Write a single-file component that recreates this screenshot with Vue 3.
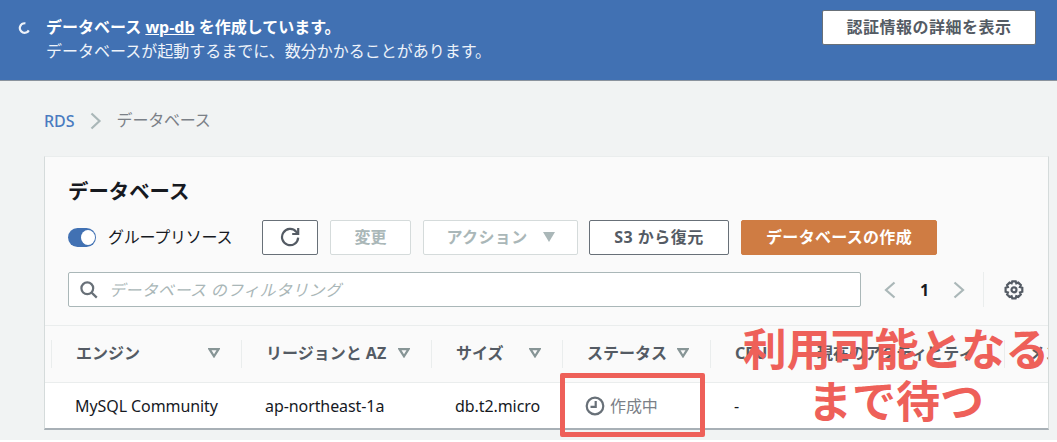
<script setup>
const columns = [
  { label: 'エンジン', width: 190, key: 'engine', sort: true },
  { label: 'リージョンと AZ', width: 190, key: 'region', sort: true },
  { label: 'サイズ', width: 131, key: 'size', sort: true },
  { label: 'ステータス', width: 148, key: 'status', sort: true },
  { label: 'CPU', width: 82, key: 'cpu', sort: false },
  { label: '現在のアクティビティ', width: 212, key: 'activity', sort: false },
  { label: 'メンテナンス', width: 150, key: 'maintenance', sort: false },
]
const rows = [
  { engine: 'MySQL Community', region: 'ap-northeast-1a', size: 'db.t2.micro', status: '作成中', cpu: '-' },
]
</script>

<template>
  <div class="page">
    <header class="flash">
      <svg class="spinner" width="12" height="12" viewBox="0 0 12 12"><path d="M7.400 1.300A4.800 4.800 0 1 0 10.800 8.400" /></svg>
      <div class="message">
        <div class="strong">データベース <a>wp-db</a> を作成しています。</div>
        <div>データベースが起動するまでに、数分かかることがあります。</div>
      </div>
      <button class="btn credentials">認証情報の詳細を表示</button>
    </header>

    <nav class="crumbs">
      <a>RDS</a>
      <svg width="12" height="18" viewBox="0 0 12 18"><path d="M1.500 1.500 9.500 9l-8 7.500" /></svg>
      <span>データベース</span>
    </nav>

    <main class="panel">
      <h1>データベース</h1>
      <div class="toolbar">
        <span class="toggle"><i></i></span>
        <span class="toggle-label"><span>グループリソース</span></span>
        <button class="btn refresh">
          <svg width="20" height="20" viewBox="0 0 20 20"><path d="M18.200 10.600A8.100 8.100 0 1 1 16.200 4.700L18 6.500" /><path d="M18.200 1v6h-6" /></svg>
        </button>
        <button class="btn modify disabled">変更</button>
        <button class="btn actions disabled">アクション<svg width="12" height="10" viewBox="0 0 12 10"><path d="M0 0h12L6 10z" /></svg></button>
        <button class="btn restore">S3 から復元</button>
        <button class="btn create">データベースの作成</button>
      </div>
      <div class="filter">
        <div class="search">
          <svg width="18" height="18" viewBox="0 0 18 18"><circle cx="7.300" cy="7.300" r="5.900" /><path d="m11.600 11.600 5.200 5" /></svg>
          <em>データベース のフィルタリング</em>
        </div>
        <div class="pager">
          <svg width="12" height="18" viewBox="0 0 12 18"><path d="M10.500 1.500 2 9l8.500 7.500" /></svg>
          <b>1</b>
          <svg width="12" height="18" viewBox="0 0 12 18"><path d="M1.500 1.500 10 9l-8.500 7.500" /></svg>
        </div>
        <div class="settings">
          <svg width="20" height="20" viewBox="0 0 20 20">
            <path d="M8.300 1.400h3.400l.6 2 2-.8 2.500 2.500-.9 1.900 2.400.8v3.900l-2.300.7.8 2-2.500 2.500-2-.8-.7 2.300H8.300l-.7-2.300-2 .8-2.500-2.500.8-2-2.300-.7V7.800l2.300-.8-.8-1.900 2.500-2.500 2 .8z" />
            <circle cx="10" cy="9.800" r="2.500" />
          </svg>
        </div>
      </div>
      <div class="table">
        <div class="row head">
          <div v-for="c in columns" :key="c.key" class="cell" :style="{ width: c.width + 'px' }">
            <span>{{ c.label }}</span>
            <svg v-if="c.sort" class="sort" width="12" height="10" viewBox="0 0 12 10"><path d="M1.500 1.200h9L6 8.300z" /></svg>
          </div>
        </div>
        <div v-for="r in rows" :key="r.engine" class="row body">
          <div v-for="c in columns" :key="c.key" class="cell" :class="'c-' + c.key" :style="{ width: c.width + 'px' }">
            <svg v-if="c.key === 'status'" width="20" height="20" viewBox="0 0 20 20"><circle cx="10" cy="10" r="8.300" /><path d="M10.700 5v5.800H5.500" /></svg>
            <span>{{ r[c.key] }}</span>
          </div>
        </div>
      </div>
    </main>

    <div class="highlight"></div>
    <div class="note"><div>利用可能となる</div><div>まで待つ</div></div>
  </div>
</template>

<style>
body { background: #fff; }
</style>

<style scoped>
* { box-sizing: border-box; }
.page {
  position: relative;
  height: 440px;
  overflow: hidden;
  background: #f1f3f3;
  color: #16191f;
  font: 16px/24px "Noto Sans", "Noto Sans CJK JP", sans-serif;
  white-space: nowrap;
}
svg { display: block; flex: none; fill: none; stroke: currentColor; stroke-width: 2.2; }
.flash {
  display: flex;
  align-items: flex-start;
  height: 81px;
  padding: 10px 21px 0 18px;
  border-bottom: 1px solid #8b939d;
  background: #4171b3;
  color: #eef3fa;
}
.spinner { margin-top: 12px; margin-right: 16px; }
.message { padding-top: 5px; }
.strong { font-weight: 700; color: #fff; }
.strong a { text-decoration: underline; }
.btn {
  display: flex;
  align-items: center;
  justify-content: center;
  flex: none;
  height: 35px;
  margin: 0;
  padding: 0 0 1px;
  border: 1px solid #687078;
  border-radius: 2px;
  background: #fff;
  color: #545b64;
  font: 700 16px/24px "Noto Sans", "Noto Sans CJK JP", sans-serif;
}
.credentials { width: 214px; margin-left: auto; letter-spacing: 0.5px; }
.crumbs { display: flex; align-items: center; height: 75px; padding: 4px 0 0 44px; color: #7b8087; }
.crumbs a { color: #4a7bc0; font-weight: 500; }
.crumbs span { margin-top: -1px; letter-spacing: -0.2px; }
.crumbs svg { margin: 0 15px; color: #aab7b8; }
.panel {
  width: 1005px;
  height: 274px;
  margin-left: 44px;
  overflow: hidden;
  border: 1px solid #d5dbdb;
  border-top-color: #eaeded;
  border-bottom: 2px solid #a8b0b6;
  background: #fafafa;
}
h1 { margin: 0; padding: 19px 0 0 23px; font-size: 20.4px; line-height: 30px; }
.toolbar { display: flex; align-items: center; height: 35px; margin-top: 14px; padding-left: 23px; }
.toggle { width: 28px; height: 19px; padding: 2px; border-radius: 10px; background: #4171b3; }
.toggle i { display: block; width: 14px; height: 15px; margin-left: 11px; border-radius: 50%; background: #fff; }
.toggle-label { width: 154px; margin: -2px 0 0 12px; letter-spacing: -0.25px; }
.refresh { width: 56px; }
.modify { width: 81px; margin-left: 12px; }
.actions { width: 155px; margin-left: 12px; letter-spacing: 0.4px; }
.actions svg { margin-left: 15px; fill: #aab7b8; stroke: none; }
.disabled { border-color: #d5dbdb; color: #aab7b8; }
.restore { width: 140px; margin-left: 11px; letter-spacing: 0.5px; }
.create { width: 196px; margin-left: 12px; border-color: #cf7c43; background: #cf7c43; color: #fff; letter-spacing: 0.3px; }
.filter { display: flex; align-items: center; height: 35px; margin-top: 17px; padding-left: 23px; }
.search {
  display: flex;
  align-items: center;
  width: 793px;
  height: 35px;
  padding-left: 11px;
  border: 1px solid #aab7b8;
  border-radius: 2px;
  background: #fff;
  color: #687078;
}
.search em { margin: 0 0 0 11px; color: #aab7b8; letter-spacing: 0.35px; }
.pager { display: flex; align-items: center; justify-content: space-between; width: 81px; margin-left: 23px; color: #aab7b8; }
.pager b { color: #16191f; }
.settings { display: flex; align-items: center; height: 35px; margin-left: 18px; padding-left: 20px; border-left: 1px solid #eaeded; color: #545b64; }
.table { width: 1003px; margin-top: 18px; overflow: hidden; }
.row { display: flex; width: 1120px; padding-left: 6px; }
.cell { display: flex; align-items: center; flex: none; }
.head { height: 58px; border-top: 1px solid #eaeded; border-bottom: 1px solid #eaeded; color: #545b64; font-weight: 700; }
.head .cell { height: 28px; margin-top: 14px; padding: 0 21px 0 24px; border-left: 1px solid #eaeded; }
.head .cell > * { position: relative; top: -1px; }
.head .sort { margin-left: auto; color: #879596; }
.body { height: 47px; padding-bottom: 2px; background: #fff; }
.body .cell { padding-left: 24px; letter-spacing: -0.08px; }
.c-status svg { margin: 0 5px 0 -1px; color: #687078; }
.c-status { color: #7b8087; }
.highlight { position: absolute; left: 560px; top: 373px; width: 145px; height: 64px; border: 5px solid #ee6059; border-radius: 2px; }
.note {
  position: absolute;
  left: 742px;
  top: 321px;
  width: 308px;
  color: #ee6059;
  font: 700 44px/52px "Noto Sans CJK JP", sans-serif;
  text-align: center;
}
</style>
